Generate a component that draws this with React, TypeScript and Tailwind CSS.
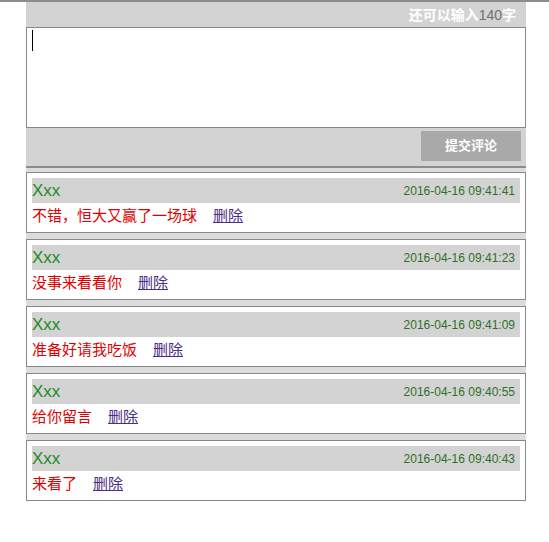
import React from "react";

const comments = [
  { name: "Xxx", time: "2016-04-16 09:41:41", text: "不错，恒大又赢了一场球" },
  { name: "Xxx", time: "2016-04-16 09:41:23", text: "没事来看看你" },
  { name: "Xxx", time: "2016-04-16 09:41:09", text: "准备好请我吃饭" },
  { name: "Xxx", time: "2016-04-16 09:40:55", text: "给你留言" },
  { name: "Xxx", time: "2016-04-16 09:40:43", text: "来看了" },
];

const font = "font-['Liberation_Sans','Noto_Sans_CJK_SC',sans-serif]";

export default function App() {
  return (
    <div className={`min-h-[542px] bg-white border-t-2 border-[#8c8c8c] ${font}`}>
      <div className="w-[500px] ml-[26px]">
        {/* Counter */}
        <div className="h-[25px] bg-[#d3d3d3] flex items-center justify-end pr-[10px] text-[14px] leading-none">
          <span className="font-bold text-white">还可以输入</span>
          <span className="text-[#707070]">140</span>
          <span className="font-bold text-white">字</span>
        </div>

        {/* Text input */}
        <div className="relative h-[101px] border border-[#888] bg-white">
          <textarea className="w-full h-full resize-none outline-none bg-transparent" />
          <span className="absolute left-[5px] top-[2px] w-px h-[21px] bg-black" />
        </div>

        {/* Submit */}
        <div className="h-[40px] bg-[#d3d3d3] border-b-2 border-[#8c8c8c] flex justify-end items-start pt-[3px] pr-[5px]">
          <button className="w-[100px] h-[30px] bg-[#a9a9a9] text-white text-[13px] font-bold">
            提交评论
          </button>
        </div>

        {/* Comment list */}
        <div className="bg-[#dcdcdc] pt-[4px] flex flex-col gap-[6px]">
          {comments.map((c, i) => (
            <div key={i} className="h-[61px] border border-[#888] bg-white p-[5px]">
              <div className="h-[25px] bg-[#d3d3d3] flex items-center justify-between pr-[5px]">
                <span className="text-[17px] text-[#228b22] leading-none">{c.name}</span>
                <span className="text-[12px] text-[#2f6f2a] leading-none">{c.time}</span>
              </div>
              <div className="h-[24px] flex items-center text-[15px] leading-none">
                <span className="text-[#e00000]">{c.text}</span>
                <a className="ml-4 underline text-[#4a2d86] cursor-pointer">删除</a>
              </div>
            </div>
          ))}
        </div>
      </div>
    </div>
  );
}
